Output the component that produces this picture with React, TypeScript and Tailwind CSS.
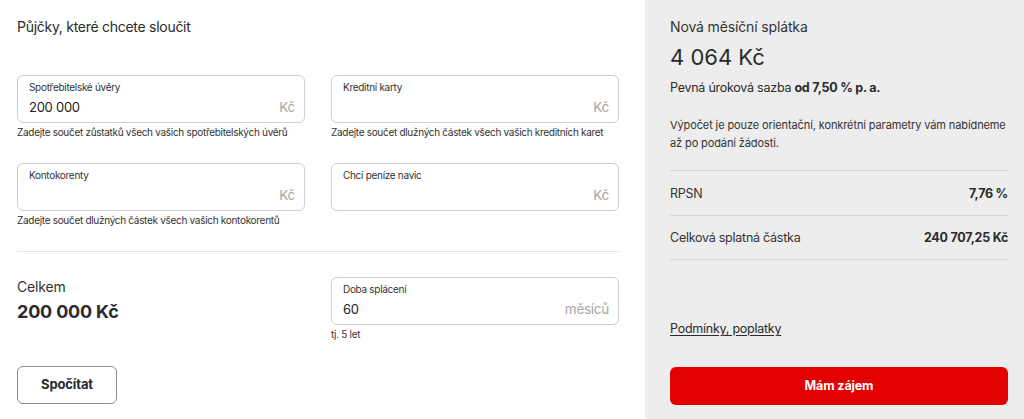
import React from "react";

interface FieldProps {
  label: string;
  value?: string;
  unit: string;
  hint?: string;
}

function Field({ label, value, unit, hint }: FieldProps) {
  return (
    <div className="flex flex-col">
      <div className="h-[48px] rounded-[6px] border border-[#cfcfcf] bg-white px-[11px] pt-[4px] flex flex-col">
        <div className="text-[10px] leading-[14px] tracking-[-0.03em] text-[#333]">{label}</div>
        <div className="flex items-center justify-between mt-[3px]">
          <span className="text-[13px] leading-[20px] tracking-[-0.02em] text-[#222]">{value}</span>
          <span className="text-[13.5px] leading-[20px] tracking-[-0.02em] text-[#a6a6a6] -mr-[2px]">{unit}</span>
        </div>
      </div>
      {hint && (
        <div className="mt-[2px] text-[10px] leading-[14px] tracking-[-0.03em] text-[#333] whitespace-nowrap">
          {hint}
        </div>
      )}
    </div>
  );
}

export default function App() {
  return (
    <div
      className="flex w-[1024px] h-[419px] bg-white text-[#2b2b2b] overflow-hidden"
      style={{ fontFamily: "Inter, 'Noto Sans', sans-serif" }}
    >
      {/* levá část */}
      <div className="w-[645px] pl-[17px] pr-[26px] pt-[17px]">
        <h2 className="text-[14px] leading-[20px] tracking-[-0.02em] text-[#2b2b2b]">Půjčky, které chcete sloučit</h2>

        <div className="grid grid-cols-2 gap-x-[26px] gap-y-[24px] mt-[38px]">
          <Field
            label="Spotřebitelské úvěry"
            value="200 000"
            unit="Kč"
            hint="Zadejte součet zůstatků všech vašich spotřebitelských úvěrů"
          />
          <Field
            label="Kreditní karty"
            unit="Kč"
            hint="Zadejte součet dlužných částek všech vašich kreditních karet"
          />
          <Field
            label="Kontokorenty"
            unit="Kč"
            hint="Zadejte součet dlužných částek všech vašich kontokorentů"
          />
          <Field label="Chci peníze navic" unit="Kč" />
        </div>

        <div className="h-px bg-[#e4e4e4] mt-[24px]" />

        <div className="grid grid-cols-2 gap-x-[26px] mt-[25px]">
          <div>
            <div className="text-[14px] leading-[20px] tracking-[-0.01em] text-[#333]">Celkem</div>
            <div className="text-[18px] leading-[26px] font-bold tracking-[-0.01em] text-[#2b2b2b] mt-[2px]">
              200 000 Kč
            </div>
          </div>
          <Field label="Doba splácení" value="60" unit="měsíců" hint="tj. 5 let" />
        </div>

        <button className="mt-[25px] w-[100px] h-[38px] rounded-[6px] border border-[#8a8a8a] text-[13px] font-bold tracking-[-0.01em] text-[#2b2b2b]">
          Spočítat
        </button>
      </div>

      {/* pravá část */}
      <div className="flex-1 bg-[#ededed] pl-[25px] pr-[16px] pt-[17px] flex flex-col">
        <div className="text-[14px] leading-[20px] tracking-[-0.01em] text-[#333]">Nová měsíční splátka</div>
        <div className="text-[22px] leading-[28px] text-[#2b2b2b] mt-[6px]">4 064 Kč</div>
        <div className="text-[12.5px] leading-[18px] tracking-[-0.02em] text-[#2b2b2b] mt-[8px]">
          Pevná úroková sazba <span className="font-bold">od 7,50 % p. a.</span>
        </div>
        <div className="text-[11px] leading-[18px] tracking-[-0.01em] text-[#333] mt-[19px]">
          Výpočet je pouze orientační, konkrétní parametry vám nabídneme až po podání žádosti.
        </div>

        <div className="h-px bg-[#d6d6d6] mt-[18px]" />
        <div className="flex justify-between items-center h-[44px] pt-[2px] text-[12.5px] tracking-[-0.02em]">
          <span className="text-[#333]">RPSN</span>
          <span className="font-bold">7,76 %</span>
        </div>
        <div className="h-px bg-[#d6d6d6]" />
        <div className="flex justify-between items-center h-[43px] pt-[1px] text-[12.5px] tracking-[-0.02em]">
          <span className="text-[#333]">Celková splatná částka</span>
          <span className="font-bold">240 707,25 Kč</span>
        </div>
        <div className="h-px bg-[#d6d6d6]" />

        <a className="mt-[60px] text-[12.5px] leading-[18px] tracking-[-0.02em] text-[#2b2b2b] underline underline-offset-2 self-start">
          Podmínky, poplatky
        </a>

        <button className="mt-[29px] h-[38px] rounded-[6px] bg-[#e30000] text-white text-[12.5px] font-bold tracking-[-0.01em]">
          Mám zájem
        </button>
      </div>
    </div>
  );
}
